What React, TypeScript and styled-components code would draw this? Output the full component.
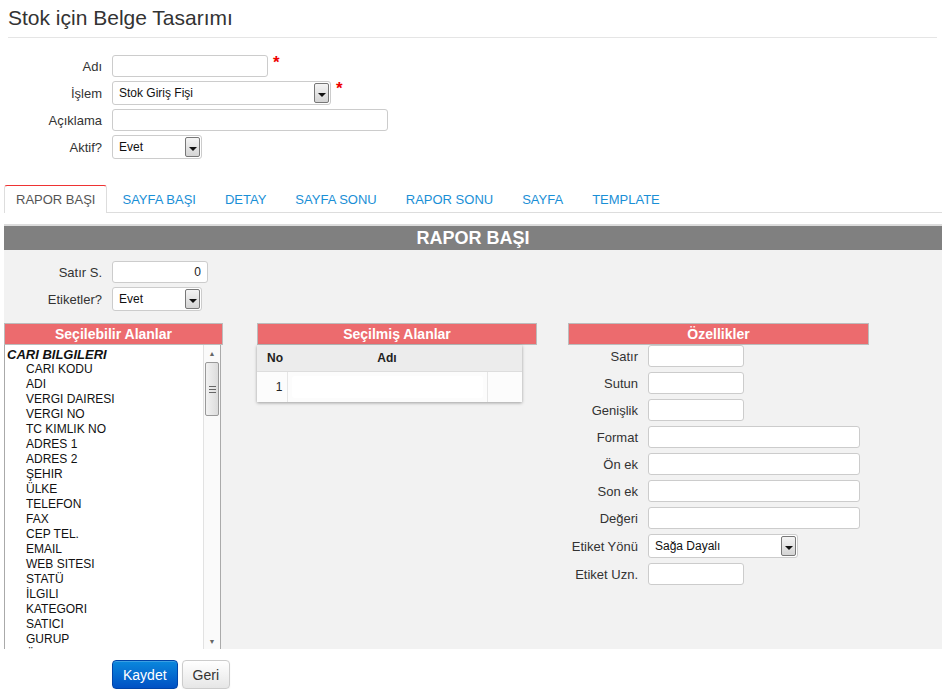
import React from 'react';
import styled, {createGlobalStyle} from 'styled-components';

const GlobalStyle = createGlobalStyle`
  body {
    margin: 0;
    background: #fff;
    font-family: "Liberation Sans", Arial, sans-serif;
    font-size: 13px;
    color: #333;
  }
`

const tabs = ['RAPOR BAŞI', 'SAYFA BAŞI', 'DETAY', 'SAYFA SONU', 'RAPOR SONU', 'SAYFA', 'TEMPLATE']

const fields = [
  'CARI KODU', 'ADI', 'VERGI DAIRESI', 'VERGI NO', 'TC KIMLIK NO', 'ADRES 1', 'ADRES 2',
  'ŞEHIR', 'ÜLKE', 'TELEFON', 'FAX', 'CEP TEL.', 'EMAIL', 'WEB SITESI', 'STATÜ', 'İLGILI',
  'KATEGORI', 'SATICI', 'GURUP', 'ÖZEL KOD'
]

const props = [
  {label: 'Satır', w: 96},
  {label: 'Sutun', w: 96},
  {label: 'Genişlik', w: 96},
  {label: 'Format', w: 212},
  {label: 'Ön ek', w: 212},
  {label: 'Son ek', w: 212},
  {label: 'Değeri', w: 212},
  {label: 'Etiket Yönü', w: 150, select: 'Sağa Dayalı'},
  {label: 'Etiket Uzn.', w: 96},
]

const Select = ({value, width}: { value: string, width: number }) => (
  <SelectBox width={width}>
    <SelectText>{value}</SelectText>
    <SelectButton/>
  </SelectBox>
)

const App = () => {
  return (
    <>
      <GlobalStyle/>
      <Page>
        <PageTitle>Stok için Belge Tasarımı</PageTitle>

        <Form labelWidth={98}>
          <Label>Adı</Label>
          <Field>
            <TextInput width={156}/>
            <Required>*</Required>
          </Field>
          <Label>İşlem</Label>
          <Field>
            <Select value="Stok Giriş Fişi" width={219}/>
            <Required>*</Required>
          </Field>
          <Label>Açıklama</Label>
          <Field>
            <TextInput width={276}/>
          </Field>
          <Label>Aktif?</Label>
          <Field>
            <Select value="Evet" width={90}/>
          </Field>
        </Form>

        <TabBar>
          {tabs.map((tab, i) => <Tab key={tab} active={i === 0}>{tab}</Tab>)}
        </TabBar>

        <SectionBar>RAPOR BAŞI</SectionBar>

        <Content>
          <Form labelWidth={98}>
            <Label>Satır S.</Label>
            <Field>
              <TextInput width={96} align="right" defaultValue="0"/>
            </Field>
            <Label>Etiketler?</Label>
            <Field>
              <Select value="Evet" width={90}/>
            </Field>
          </Form>

          <Panels>
            <Panel width={219} offset={0}>
              <PanelHead>Seçilebilir Alanlar</PanelHead>
              <ListBox>
                <ListItems>
                  <GroupTitle>CARI BILGILERI</GroupTitle>
                  {fields.map(f => <ListItem key={f}>{f}</ListItem>)}
                </ListItems>
                <ScrollTrack>
                  <ScrollArrow>▲</ScrollArrow>
                  <ScrollThumb>
                    <Grip/>
                  </ScrollThumb>
                  <ScrollSpacer/>
                  <ScrollArrow>▼</ScrollArrow>
                </ScrollTrack>
              </ListBox>
            </Panel>

            <Panel width={280} offset={34}>
              <PanelHead>Seçilmiş Alanlar</PanelHead>
              <Table>
                <colgroup>
                  <col style={{width: 30}}/>
                  <col style={{width: 200}}/>
                  <col style={{width: 35}}/>
                </colgroup>
                <thead>
                <tr>
                  <Th>No</Th>
                  <Th center>Adı</Th>
                  <Th/>
                </tr>
                </thead>
                <tbody>
                <tr>
                  <Td right>1</Td>
                  <Td><CellInput/></Td>
                  <Td/>
                </tr>
                </tbody>
              </Table>
            </Panel>

            <Panel width={301} offset={31}>
              <PanelHead>Özellikler</PanelHead>
              <PropForm>
                {props.map(p => (
                  <React.Fragment key={p.label}>
                    <Label>{p.label}</Label>
                    <Field>
                      {p.select
                        ? <Select value={p.select} width={p.w}/>
                        : <TextInput width={p.w}/>
                      }
                    </Field>
                  </React.Fragment>
                ))}
              </PropForm>
            </Panel>
          </Panels>
        </Content>

        <Actions>
          <Button primary>Kaydet</Button>
          <Button>Geri</Button>
        </Actions>
      </Page>
    </>
  )
}

export default App

const Page = styled.div`
  width: 938px;
  padding: 0 8px 0 4px;
`

const PageTitle = styled.h1`
  margin: 0 5px 0 4px;
  padding: 6px 0 7px;
  font-size: 21px;
  line-height: 24px;
  font-weight: normal;
  color: #333;
  border-bottom: 1px solid #e5e5e5;
`

const Form = styled.div<{ labelWidth: number }>`
  display: grid;
  grid-template-columns: ${props => props.labelWidth}px auto;
  column-gap: 10px;
  row-gap: 4px;
  margin-top: 17px;
  align-items: center;
`

const Label = styled.label`
  text-align: right;
  font-size: 13px;
  color: #333;
  white-space: nowrap;
`

const Field = styled.div`
  display: flex;
  align-items: flex-start;
`

const TextInput = styled.input<{ width: number, align?: string }>`
  box-sizing: border-box;
  width: ${props => props.width}px;
  height: 22px;
  margin: 0;
  padding: 0 6px;
  border: 1px solid #ccc;
  border-radius: 3px;
  background: #fff;
  font-family: "Liberation Sans", Arial, sans-serif;
  font-size: 12px;
  color: #222;
  text-align: ${props => props.align || 'left'};
  outline: none;
`

const Required = styled.span`
  margin: 1px 0 0 5px;
  color: #e00;
  font-weight: bold;
  font-size: 17px;
  line-height: 14px;
`

const SelectBox = styled.div<{ width: number }>`
  box-sizing: border-box;
  width: ${props => props.width}px;
  height: 24px;
  display: flex;
  align-items: stretch;
  padding: 1px;
  border: 1px solid #ccc;
  border-radius: 3px;
  background: #fff;
`

const SelectText = styled.div`
  flex: 1;
  display: flex;
  align-items: center;
  padding-left: 5px;
  font-size: 12px;
  color: #111;
`

const SelectButton = styled.div`
  position: relative;
  width: 13px;
  border: 1px solid #777;
  border-radius: 2px;
  background: linear-gradient(#f4f4f4, #d4d4d4);

  &::after {
    content: '';
    position: absolute;
    left: 3px;
    top: 9px;
    border-left: 4px solid transparent;
    border-right: 4px solid transparent;
    border-top: 4px solid #111;
  }
`

const TabBar = styled.div`
  display: flex;
  margin-top: 26px;
  height: 27px;
  border-bottom: 1px solid #ddd;
`

const Tab = styled.div<{ active?: boolean }>`
  box-sizing: border-box;
  height: ${props => props.active ? '28px' : '27px'};
  padding: ${props => props.active ? '0 11px' : '0 13px 0 14px'};
  display: flex;
  align-items: center;
  font-size: 13px;
  color: ${props => props.active ? '#555' : '#1a8fd6'};
  background: ${props => props.active ? '#fff' : 'transparent'};
  border-top: 1px solid ${props => props.active ? '#e33' : 'transparent'};
  border-left: 1px solid ${props => props.active ? '#ddd' : 'transparent'};
  border-right: 1px solid ${props => props.active ? '#ddd' : 'transparent'};
  border-radius: 3px 3px 0 0;
  cursor: pointer;
`

const SectionBar = styled.div`
  margin-top: 11px;
  height: 24px;
  border-top: 2px solid #dcdcdc;
  background: #808080;
  color: #fff;
  font-size: 18px;
  font-weight: bold;
  line-height: 24px;
  text-align: center;
`

const Content = styled.div`
  box-sizing: border-box;
  height: 399px;
  padding-top: 11px;
  background: #f2f2f2;
  overflow: hidden;

  & > ${Form} {
    margin-top: 0;
  }
`

const Panels = styled.div`
  display: flex;
  align-items: flex-start;
  margin-top: 12px;
`

const Panel = styled.div<{ width: number, offset: number }>`
  width: ${props => props.width}px;
  margin-left: ${props => props.offset}px;
`

const PanelHead = styled.div`
  box-sizing: border-box;
  height: 22px;
  border: 1px solid #bcbcbc;
  background: #ec6b6e;
  color: #fff;
  font-size: 14px;
  font-weight: bold;
  line-height: 20px;
  text-align: center;
`

const ListBox = styled.div`
  box-sizing: border-box;
  width: 217px;
  height: 306px;
  display: flex;
  border: 1px solid #aaa;
  border-top: 0;
  background: #fff;
`

const ListItems = styled.div`
  flex: 1;
  overflow: hidden;
  padding: 2px 0 0 2px;
  font-size: 12px;
  line-height: 15px;
  color: #111;
`

const GroupTitle = styled.div`
  font-weight: bold;
  font-style: italic;
  font-size: 13px;
`

const ListItem = styled.div`
  padding-left: 19px;
`

const ScrollTrack = styled.div`
  width: 16px;
  display: flex;
  flex-direction: column;
  border-left: 1px solid #e2e2e2;
  background: #fafafa;
`

const ScrollArrow = styled.div`
  height: 17px;
  font-size: 7px;
  line-height: 17px;
  text-align: center;
  color: #666;
`

const ScrollThumb = styled.div`
  box-sizing: border-box;
  height: 54px;
  margin: 0 1px;
  display: flex;
  align-items: center;
  justify-content: center;
  border: 1px solid #999;
  border-radius: 2px;
  background: linear-gradient(to right, #f2f2f2, #dcdcdc);
`

const Grip = styled.div`
  width: 7px;
  height: 5px;
  border-top: 1px solid #666;
  border-bottom: 1px solid #666;
  background: linear-gradient(#666, #666) center / 100% 1px no-repeat;
`

const ScrollSpacer = styled.div`
  flex: 1;
`

const Table = styled.table`
  width: 265px;
  table-layout: fixed;
  border-collapse: collapse;
  background: #fcfcfc;
  box-shadow: 0 1px 3px rgba(0, 0, 0, 0.35);
  font-size: 12px;
`

const Th = styled.th<{ center?: boolean }>`
  height: 26px;
  padding: ${props => props.center ? '0' : '0 0 0 10px'};
  background: #ececec;
  border-bottom: 1px solid #ddd;
  font-weight: bold;
  color: #222;
  text-align: ${props => props.center ? 'center' : 'left'};
`

const Td = styled.td<{ right?: boolean }>`
  height: 30px;
  padding: 0 4px;
  border-right: 1px solid #e6e6e6;
  text-align: ${props => props.right ? 'right' : 'left'};
  color: #222;

  &:last-child {
    border-right: 0;
  }
`

const CellInput = styled.div`
  height: 22px;
  border-radius: 3px;
  background: #fff;
`

const PropForm = styled.div`
  display: grid;
  grid-template-columns: 70px auto;
  column-gap: 10px;
  row-gap: 5px;
  align-items: center;
`

const Actions = styled.div`
  display: flex;
  gap: 4px;
  margin-top: 11px;
  padding-left: 108px;
`

const Button = styled.button<{ primary?: boolean }>`
  height: 29px;
  padding: 0 10px;
  border: 1px solid ${props => props.primary ? '#0044a8' : '#ccc'};
  border-radius: 4px;
  background: ${props => props.primary
          ? 'linear-gradient(#0a88dd, #0051c4)'
          : 'linear-gradient(#fff, #e6e6e6)'};
  color: ${props => props.primary ? '#fff' : '#333'};
  font-family: "Liberation Sans", Arial, sans-serif;
  font-size: 14px;
  box-shadow: inset 0 1px 0 rgba(255, 255, 255, 0.2), 0 1px 2px rgba(0, 0, 0, 0.05);
  cursor: pointer;
`
